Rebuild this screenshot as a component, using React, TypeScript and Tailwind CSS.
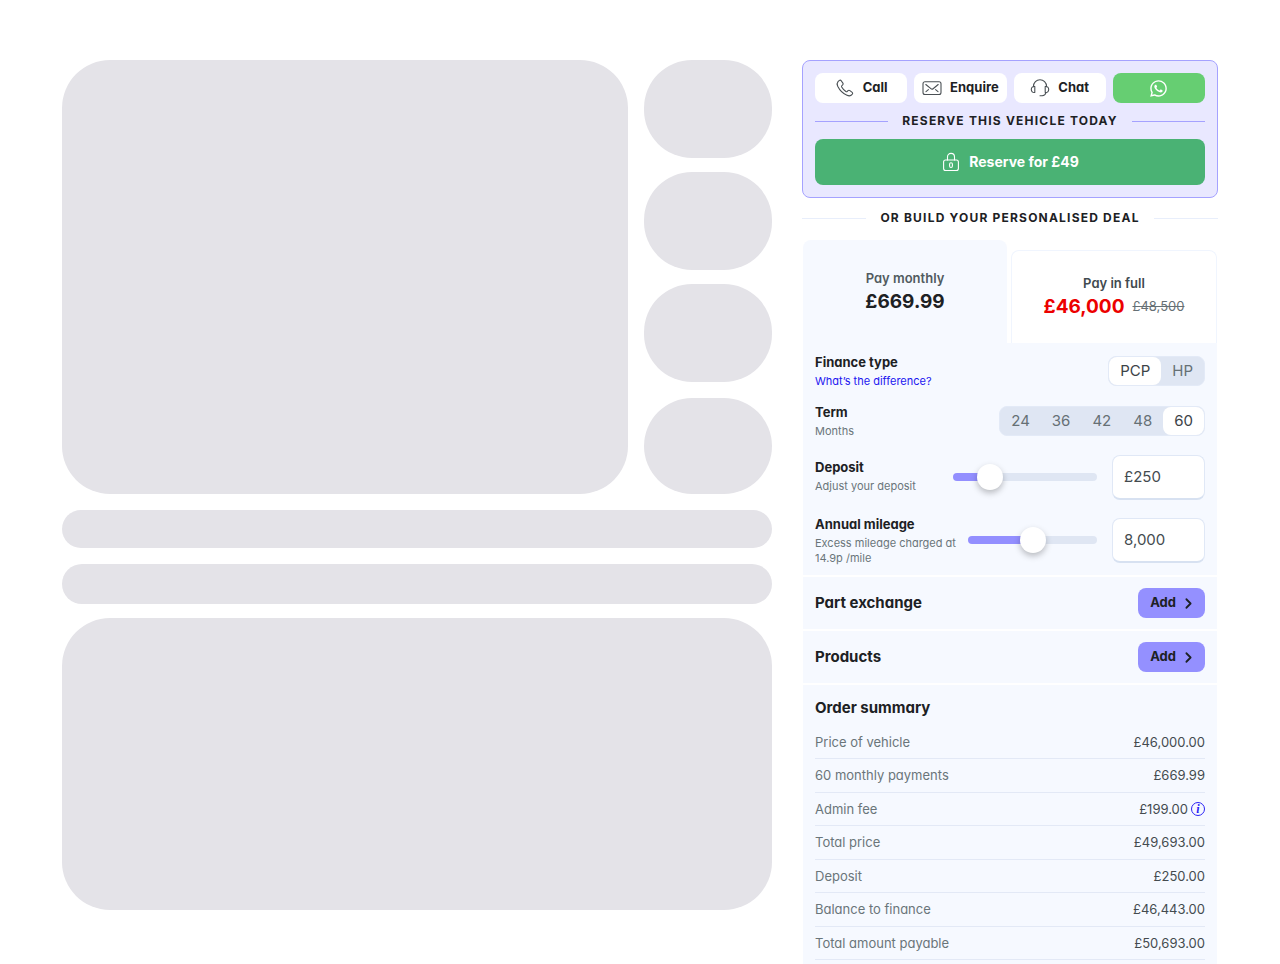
import React, { useState } from 'react';
import { ChevronRight } from 'lucide-react';
import { FaWhatsapp } from 'react-icons/fa';

interface SummaryRow {
  label: string;
  value: string;
  info?: boolean;
}

const summaryRows: SummaryRow[] = [
  { label: 'Price of vehicle', value: '£46,000.00' },
  { label: '60 monthly payments', value: '£669.99' },
  { label: 'Admin fee', value: '£199.00', info: true },
  { label: 'Total price', value: '£49,693.00' },
  { label: 'Deposit', value: '£250.00' },
  { label: 'Balance to finance', value: '£46,443.00' },
  { label: 'Total amount payable', value: '£50,693.00' },
];

const PhoneIcon = () => (
  <svg className="h-5 w-5" viewBox="0 0 20 20" fill="none" stroke="currentColor" strokeWidth="1.1" strokeLinecap="round" strokeLinejoin="round">
    <path d="M3 3.600 4.400 2.400q1-.7 1.800.3L7.900 5.100q.7 1-.2 1.800l-.8.700q-.6.600-.2 1.400 1.500 2.700 4.200 4.500.8.500 1.400-.1l.7-.7q.9-.9 1.900-.1l2.300 1.800q.9.800.1 1.700l-1.200 1.200q-1.700 1.100-4.100 0-6.100-2.700-9.300-9.100-1.200-2.900.3-4.600z" />
  </svg>
);

const MailIcon = () => (
  <svg className="h-5 w-5" viewBox="0 0 20 20" fill="none" stroke="currentColor" strokeWidth="1.1" strokeLinecap="round" strokeLinejoin="round">
    <rect x="1" y="3.7" width="18" height="12.8" rx="2" />
    <path d="M3.8 6.5 8.9 10.7q1.1.9 2.2 0l5.1-4.2M4 13.6l2.4-2M16 13.6l-2.4-2" />
  </svg>
);

const HeadsetIcon = () => (
  <svg className="h-5 w-5" viewBox="0 0 20 20" fill="none" stroke="currentColor" strokeWidth="1.1" strokeLinecap="round" strokeLinejoin="round">
    <path d="M3.500 8.600V8.200a6.500 6.500 0 0 1 13 0v.4" />
    <path d="M4.800 8.600c-2.200-.4-3.500 1-3.500 2.900s1.300 3.300 3.500 2.900z" />
    <path d="M15.200 8.600c2.200-.4 3.500 1 3.500 2.900s-1.300 3.300-3.500 2.900z" />
    <path d="M16 14.600c-.6 1.900-2 2.900-3.800 3.100H10" />
  </svg>
);

const LockIcon = () => (
  <svg className="h-5 w-5" viewBox="0 0 20 20" fill="none" stroke="currentColor" strokeWidth="1.1" strokeLinecap="round" strokeLinejoin="round">
    <rect x="2.600" y="8" width="14.800" height="10.500" rx="2" />
    <path d="M6.500 8V4.900a3.500 3.500 0 0 1 7 0V8" />
    <rect x="8.600" y="10.700" width="2.800" height="4.800" rx="1.400" />
  </svg>
);

interface DividerProps {
  text: string;
  lineClass: string;
}

const DividerHeading: React.FC<DividerProps> = ({ text, lineClass }) => (
  <div className="flex items-center gap-3.5">
    <span className={`flex-1 border-t ${lineClass}`} />
    <h2 className="text-xs leading-4 font-bold tracking-widest whitespace-nowrap">{text}</h2>
    <span className={`flex-1 border-t ${lineClass}`} />
  </div>
);

interface SegmentedProps {
  name: string;
  options: string[];
  value: string;
  onChange: (value: string) => void;
}

const Segmented: React.FC<SegmentedProps> = ({ name, options, value, onChange }) => (
  <div role="radiogroup" aria-label={name} className="flex h-[30px] rounded-lg border border-[#e3eaf7] bg-[#dfe6f3]">
    {options.map((option) => (
      <label
        key={option}
        className="relative flex cursor-pointer items-center rounded-lg px-[11px] text-[15px] text-[#667075] has-checked:bg-white has-checked:text-[#3c4347]"
      >
        <input
          type="radio"
          name={name}
          value={option}
          checked={option === value}
          onChange={() => onChange(option)}
          className="sr-only"
        />
        {option}
      </label>
    ))}
  </div>
);

interface SliderProps {
  label: string;
  min: number;
  max: number;
  step: number;
  value: number;
  onChange: (value: number) => void;
}

const Slider: React.FC<SliderProps> = ({ label, min, max, step, value, onChange }) => {
  const filled = ((value - min) / (max - min)) * 100;

  return (
    <input
      type="range"
      aria-label={label}
      min={min}
      max={max}
      step={step}
      value={value}
      onChange={(e) => onChange(Number(e.target.value))}
      style={{ backgroundImage: `linear-gradient(to right, #938fff ${filled}%, #dfe6f3 ${filled}%)` }}
      className="h-2 min-w-0 flex-1 cursor-pointer appearance-none rounded-full [&::-webkit-slider-thumb]:size-[26px] [&::-webkit-slider-thumb]:appearance-none [&::-webkit-slider-thumb]:rounded-full [&::-webkit-slider-thumb]:bg-white [&::-webkit-slider-thumb]:shadow-[0_3px_6px_rgba(0,0,0,0.25)]"
    />
  );
};

const contactClass = 'flex h-[30px] flex-1 items-center justify-center gap-2 rounded-lg bg-white text-[13px] font-bold';
const amountClass =
  'h-[45px] w-[93px] rounded-lg border border-b-2 border-[#e0e8f6] border-b-[#d7e1f1] bg-white px-[11px] text-[15px] text-[#444b4f]';

const AddRow: React.FC<{ title: string }> = ({ title }) => (
  <section className="flex h-[52px] items-center justify-between bg-[#f6f9ff] px-3">
    <h3 className="text-[15px] font-bold">{title}</h3>
    <button type="button" aria-label={`Add ${title}`} className="flex h-[30px] items-center gap-1 rounded-lg bg-[#9490ff] pr-2 pl-3 text-[13px] font-bold">
      Add
      <ChevronRight className="h-[17px] w-[17px]" strokeWidth={2.5} />
    </button>
  </section>
);

const App: React.FC = () => {
  const [tab, setTab] = useState('monthly');
  const [finance, setFinance] = useState('PCP');
  const [term, setTerm] = useState('60');
  const [deposit, setDeposit] = useState(250);
  const [mileage, setMileage] = useState(8000);

  const toNumber = (text: string) => Number(text.replace(/[^0-9]/g, ''));

  return (
    <main className="flex min-h-screen gap-[30px] bg-white px-[62px] pt-[60px] font-['Inter','Liberation_Sans',sans-serif] text-[#1d2124] [font-feature-settings:'cv11']">
      <div className="flex min-w-0 flex-1 flex-col">
        <div className="flex gap-4">
          <div className="h-[434px] flex-1 rounded-[48px] bg-[#e4e3e8]" />
          <div className="flex w-32 flex-col gap-3.5">
            <div className="h-[98px] rounded-[48px] bg-[#e4e3e8]" />
            <div className="h-[98px] rounded-[48px] bg-[#e4e3e8]" />
            <div className="h-[98px] rounded-[48px] bg-[#e4e3e8]" />
            <div className="mt-auto h-24 rounded-[48px] bg-[#e4e3e8]" />
          </div>
        </div>
        <div className="mt-4 h-[38px] rounded-full bg-[#e4e3e8]" />
        <div className="mt-4 h-10 rounded-full bg-[#e4e3e8]" />
        <div className="mt-3.5 h-[292px] rounded-[48px] bg-[#e4e3e8]" />
      </div>

      <aside className="flex w-[416px] shrink-0 flex-col">
        <section className="rounded-lg border border-[#a5a2ff] bg-[#e9e8ff] p-3">
          <div className="flex gap-[7px]">
            <button type="button" className={contactClass}>
              <span className="text-[#4a5054]"><PhoneIcon /></span>
              Call
            </button>
            <button type="button" className={contactClass}>
              <span className="text-[#4a5054]"><MailIcon /></span>
              Enquire
            </button>
            <button type="button" className={contactClass}>
              <span className="text-[#4a5054]"><HeadsetIcon /></span>
              Chat
            </button>
            <button type="button" aria-label="WhatsApp" className="flex h-[30px] flex-1 items-center justify-center rounded-lg bg-[#66ce72] text-white">
              <FaWhatsapp className="h-[19px] w-[19px]" />
            </button>
          </div>
          <div className="my-2.5">
            <DividerHeading text="RESERVE THIS VEHICLE TODAY" lineClass="border-[#a5a2ff]" />
          </div>
          <button type="button" className="flex h-[46px] w-full items-center justify-center gap-2 rounded-lg bg-[#4ab274] text-sm font-bold text-white">
            <LockIcon />
            Reserve for £49
          </button>
        </section>

        <div className="my-3">
          <DividerHeading text="OR BUILD YOUR PERSONALISED DEAL" lineClass="border-[#e8eefb]" />
        </div>

        <div className="mx-px mt-0.5 flex flex-1 flex-col">
          <div role="tablist" className="flex items-end gap-1">
            <button
              type="button"
              role="tab"
              aria-selected={tab === 'monthly'}
              onClick={() => setTab('monthly')}
              className="flex h-[103px] flex-1 flex-col items-center justify-center rounded-t-lg bg-[#f6f9ff]"
            >
              <span className="text-[13px] leading-5 font-semibold text-[#515b60]">Pay monthly</span>
              <span className="text-[19px] leading-7 font-bold">£669.99</span>
            </button>
            <button
              type="button"
              role="tab"
              aria-selected={tab === 'full'}
              onClick={() => setTab('full')}
              className="flex h-[93px] flex-1 flex-col items-center justify-center rounded-t-lg border border-b-0 border-[#f0f5fe] bg-white"
            >
              <span className="text-[13px] leading-5 font-semibold text-[#414a4f]">Pay in full</span>
              <span className="flex items-center gap-2">
                <span className="text-[19px] leading-7 font-bold text-[#ec0000]">£46,000</span>
                <s className="text-[13px] text-[#667075]">£48,500</s>
              </span>
            </button>
          </div>

          <section className="bg-[#f6f9ff] px-3 pt-2.5 pb-[3px]">
            <div className="flex h-[50px] items-start justify-between">
              <div>
                <h3 className="text-[13px] leading-[19px] font-bold">Finance type</h3>
                <a href="#difference" className="block text-[11px] leading-[19px] text-[#1c16f0]">What’s the difference?</a>
              </div>
              <div className="pt-[3px]">
                <Segmented name="Finance type" options={['PCP', 'HP']} value={finance} onChange={setFinance} />
              </div>
            </div>

            <div className="flex h-[50px] items-start justify-between">
              <div>
                <h3 className="text-[13px] leading-[19px] font-bold">Term</h3>
                <p className="text-[11px] leading-[19px] text-[#6a757a]">Months</p>
              </div>
              <div className="pt-[3px]">
                <Segmented name="Term" options={['24', '36', '42', '48', '60']} value={term} onChange={setTerm} />
              </div>
            </div>

            <div className="flex h-12 items-center">
              <div className="w-[138px]">
                <label htmlFor="deposit" className="block text-[13px] leading-[19px] font-bold">Deposit</label>
                <p className="text-[11px] leading-[19px] text-[#6a757a]">Adjust your deposit</p>
              </div>
              <Slider label="Adjust deposit" min={0} max={1250} step={50} value={deposit} onChange={setDeposit} />
              <input
                id="deposit"
                type="text"
                value={`£${deposit.toLocaleString('en-GB')}`}
                onChange={(e) => setDeposit(toNumber(e.target.value))}
                className={`ml-[15px] ${amountClass}`}
              />
            </div>

            <div className="mt-[7px] flex h-16 items-center">
              <div className="w-[153px]">
                <label htmlFor="mileage" className="mb-0.5 block text-[13px] leading-[19px] font-bold">Annual mileage</label>
                <p className="text-[11px] leading-[15px] whitespace-nowrap text-[#6a757a]">
                  Excess mileage charged at
                  <br />
                  14.9p /mile
                </p>
              </div>
              <Slider label="Adjust mileage" min={4000} max={12000} step={500} value={mileage} onChange={setMileage} />
              <input
                id="mileage"
                type="text"
                value={mileage.toLocaleString('en-GB')}
                onChange={(e) => setMileage(toNumber(e.target.value))}
                className={`ml-[15px] ${amountClass}`}
              />
            </div>
          </section>

          <div className="mt-0.5 flex flex-1 flex-col gap-0.5">
            <AddRow title="Part exchange" />
            <AddRow title="Products" />

            <section className="flex-1 bg-[#f6f9ff] px-3 pt-[11px]">
              <h3 className="text-[15px] leading-6 font-bold">Order summary</h3>
              <table className="mt-1.5 h-[234px] w-full text-[13px] leading-5">
                <tbody>
                  {summaryRows.map((row) => (
                    <tr key={row.label} className="border-b border-[#e3e9f6]">
                      <th scope="row" className="text-left font-normal text-[#6a757a]">{row.label}</th>
                      <td className="text-right text-[#444b4f]">
                        <span className="inline-flex items-center gap-[3px]">
                          {row.value}
                          {row.info && (
                            <button
                              type="button"
                              aria-label="About the admin fee"
                              className="flex size-[14px] items-center justify-center rounded-full border border-[#2a22f5] font-['Liberation_Serif',serif] text-[12px] leading-3 font-bold text-[#2a22f5] italic"
                            >
                              i
                            </button>
                          )}
                        </span>
                      </td>
                    </tr>
                  ))}
                </tbody>
              </table>
            </section>
          </div>
        </div>
      </aside>
    </main>
  );
};

export default App;
